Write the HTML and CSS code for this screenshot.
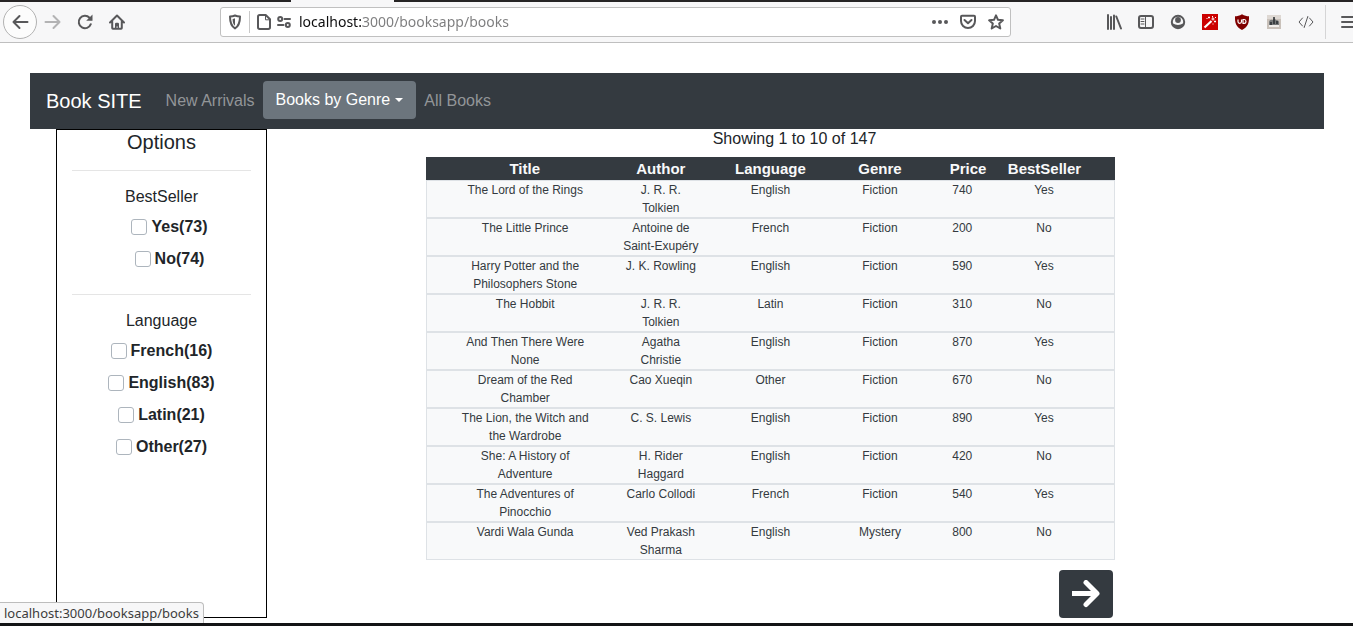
FILE: index.html
```html
<!DOCTYPE html>
<html lang="en">
<head>
<meta charset="utf-8">
<meta name="viewport" content="width=device-width, initial-scale=1">
<title>Book SITE</title>
<link rel="stylesheet" href="styles.css">
</head>
<body>
<header class="browser">
  <div class="tabstrip"><span class="tab-active"></span></div>
  <div class="toolbar">
    <button class="tool back" aria-label="Back"><svg width="18" height="18" viewBox="0 0 18 18"><path d="M16.500 9H2.500M8.500 3 2.500 9l6 6" class="ln"/></svg></button>
    <button class="tool dim" aria-label="Forward"><svg width="18" height="18" viewBox="0 0 18 18"><path d="M1.500 9h14M9.500 3l6 6-6 6" class="ln"/></svg></button>
    <button class="tool" aria-label="Reload"><svg width="18" height="18" viewBox="0 0 18 18"><path d="M14.800 11.200A6.200 6.200 0 1 1 13.500 4.800L15 6.300" class="ln"/><path d="M16.500 1.500v6.300h-6.300z" fill="currentColor"/></svg></button>
    <button class="tool" aria-label="Home"><svg width="18" height="18" viewBox="0 0 18 18"><path d="M2 9.500 9 2.500l7 7M4.200 8.500v6.600q0 .7.700.7h8.200q.7 0 .7-.7V8.500" class="ln"/><path d="M7 16v-5q0-1.200 1.200-1.200h1.600q1.200 0 1.200 1.200v5H9.700v-2.500H8.500V16z" fill="currentColor"/></svg></button>
    <div class="urlbar">
      <span class="shield"><svg width="14" height="16" viewBox="0 0 14 16"><path d="M7 1.500c2 .9 3.500 1 5 1 0 6-.8 9.500-5 11.900C2.800 12 2 8.500 2 2.500c1.500 0 3-.1 5-1z" class="ln"/><path d="M7 4.300v7.400C5 10 4.700 8 4.600 4.900 5.500 4.800 6.200 4.600 7 4.300z" fill="currentColor"/></svg></span>
      <svg class="page-icon" width="14" height="16" viewBox="0 0 14 16"><path d="M2.700 1h6L13 5.300v8q0 1.700-1.700 1.700H2.700Q1 15 1 13.300V2.700Q1 1 2.700 1z" class="ln"/><path d="M8.500 1v4.800H13" class="ln thin"/></svg>
      <svg class="perm-icon" width="14" height="14" viewBox="0 0 14 14"><circle cx="3.200" cy="4" r="2" class="ln"/><circle cx="10.800" cy="10" r="2" class="ln"/><path d="M7.500 4H13M1 10h5.500" class="ln"/></svg>
      <input class="address" type="text" aria-label="Address" value="localhost:3000/booksapp/books">
      <button class="mini" aria-label="Page actions"><svg width="16" height="16" viewBox="0 0 16 16" fill="currentColor"><circle cx="2" cy="8" r="2"/><circle cx="8" cy="8" r="2"/><circle cx="14" cy="8" r="2"/></svg></button>
      <button class="mini" aria-label="Save to Pocket"><svg width="16" height="16" viewBox="0 0 16 16"><path d="M2 1.800h12q1 0 1 1V7A7 7 0 0 1 1 7V2.800q0-1 1-1z" class="ln"/><path d="M4.500 6 8 9.300 11.500 6" class="ln"/></svg></button>
      <button class="mini" aria-label="Bookmark"><svg width="16" height="16" viewBox="0 0 16 16"><path d="m8 1.300 2 4.500 4.900.5-3.700 3.300 1.100 4.900L8 12l-4.300 2.500 1.100-4.900L1.100 6.300 6 5.800z" class="ln"/></svg></button>
    </div>
    <button class="tool" aria-label="Library"><svg width="16" height="16" viewBox="0 0 16 16"><path d="M2 1v14M5 3v12M8 1.500V15M10.300 2.500 15 14.500" class="ln"/></svg></button>
    <button class="tool" aria-label="Sidebars"><svg width="16" height="16" viewBox="0 0 16 16"><rect x="1" y="2" width="14" height="12" rx="2" class="ln"/><path d="M7.500 2v12M3 5h3M3 7.500h3M3 10h3" class="ln hair"/></svg></button>
    <button class="tool" aria-label="Account"><svg width="16" height="16" viewBox="0 0 16 16"><circle cx="8" cy="8" r="6.200" class="ln"/><circle cx="8" cy="6" r="2.900" fill="currentColor"/><path d="M2.500 9.300q5.500 3.400 11 0-1 5.200-5.500 5.200t-5.500-5.200z" fill="currentColor"/></svg></button>
    <button class="tool" aria-label="Color tool"><svg width="16" height="16" viewBox="0 0 16 16"><path d="M0 0h16v16H0z" fill="#cc0000"/><path d="m2.500 13.500 7-6.500" stroke="#fff" stroke-width="2.200"/><path d="M7 2.500v2M6 3.500h2M10.500 2v1.500M9.500 5h3M11 3.500v3M13 6.500v2M12 7.500h2M13.500 3v1M4.500 4.500h1M11 9.500v1" stroke="#fff"/></svg></button>
    <button class="tool" aria-label="Ad blocker"><svg width="16" height="16" viewBox="0 0 16 16"><path d="M8 .2c2.500 1.600 4.700 2 7 2C15.200 9 14 12.800 8 16 2 12.800.8 9 1 2.200c2.300 0 4.500-.4 7-2z" fill="#800000"/><path d="M4 5.500v2.300q0 1.500 1.700 1.500T7.500 7.800V5.500M9 5.500v3.800h1.200q1.800 0 1.800-1.900t-1.800-1.900z" fill="none" stroke="#fff" stroke-width="1.200"/></svg></button>
    <button class="tool" aria-label="Extension"><svg width="16" height="16" viewBox="0 0 16 16"><path d="M1 1h14v14H1z" fill="#c9c1ba"/><path d="M1 1h14v4H1z" fill="#ded8d3"/><path d="M3 9q0-4 4-3l1-2 2 2q4 0 3 5H3z" fill="#757879"/><path d="M8 3v7M5 8v3M11 7v3" stroke="#292c30" stroke-width="1.500"/><path d="M3 12h10" stroke="#f1eeeb" stroke-width="2"/></svg></button>
    <button class="tool" aria-label="Developer"><svg width="16" height="16" viewBox="0 0 16 16"><path d="M4.500 4 1 8l3.500 4M11.500 4 15 8l-3.500 4M9.800 2.500 6.200 13.500" class="ln thin"/></svg></button>
    <button class="menu" aria-label="Open menu"><svg width="12" height="14" viewBox="0 0 12 14"><path d="M1 2h13M1 7h13M1 12h13" class="ln"/></svg></button>
  </div>
</header>

<div class="site">
  <nav class="navbar">
    <a class="brand" href="#">Book SITE</a>
    <a class="nav-link" href="#">New Arrivals</a>
    <button class="dropdown">Books by Genre<span class="caret"></span></button>
    <a class="nav-link" href="#">All Books</a>
  </nav>
  <div class="content">
    <aside class="options">
      <h1 class="options-title">Options</h1>
      <fieldset class="group indented">
        <legend>BestSeller</legend>
        <label><input type="checkbox">Yes(73)</label>
        <label><input type="checkbox">No(74)</label>
      </fieldset>
      <fieldset class="group">
        <legend>Language</legend>
        <label><input type="checkbox">French(16)</label>
        <label><input type="checkbox">English(83)</label>
        <label><input type="checkbox">Latin(21)</label>
        <label><input type="checkbox">Other(27)</label>
      </fieldset>
    </aside>
    <main class="results">
      <p class="count">Showing 1 to 10 of 147</p>
      <div class="listing">
        <table class="books">
          <colgroup><col class="c-title"><col class="c-mid"><col class="c-mid"><col class="c-mid"><col class="c-price"><col></colgroup>
          <thead><tr><th>Title</th><th>Author</th><th>Language</th><th>Genre</th><th>Price</th><th>BestSeller</th></tr></thead>
          <tbody>
            <tr><td>The Lord of the Rings</td><td>J. R. R. Tolkien</td><td>English</td><td>Fiction</td><td>740</td><td>Yes</td></tr>
            <tr><td>The Little Prince</td><td>Antoine de Saint-Exupéry</td><td>French</td><td>Fiction</td><td>200</td><td>No</td></tr>
            <tr><td>Harry Potter and the Philosophers Stone</td><td>J. K. Rowling</td><td>English</td><td>Fiction</td><td>590</td><td>Yes</td></tr>
            <tr><td>The Hobbit</td><td>J. R. R. Tolkien</td><td>Latin</td><td>Fiction</td><td>310</td><td>No</td></tr>
            <tr><td>And Then There Were None</td><td>Agatha Christie</td><td>English</td><td>Fiction</td><td>870</td><td>Yes</td></tr>
            <tr><td>Dream of the Red Chamber</td><td>Cao Xueqin</td><td>Other</td><td>Fiction</td><td>670</td><td>No</td></tr>
            <tr><td>The Lion, the Witch and the Wardrobe</td><td>C. S. Lewis</td><td>English</td><td>Fiction</td><td>890</td><td>Yes</td></tr>
            <tr><td>She: A History of Adventure</td><td>H. Rider Haggard</td><td>English</td><td>Fiction</td><td>420</td><td>No</td></tr>
            <tr><td>The Adventures of Pinocchio</td><td>Carlo Collodi</td><td>French</td><td>Fiction</td><td>540</td><td>Yes</td></tr>
            <tr><td>Vardi Wala Gunda</td><td>Ved Prakash Sharma</td><td>English</td><td>Mystery</td><td>800</td><td>No</td></tr>
          </tbody>
        </table>
        <button class="next" aria-label="Next page"><svg width="28" height="28" viewBox="0 0 28 28" fill="none" stroke="#fff" stroke-linejoin="round"><path d="M0 13.500h22" stroke-width="5"/><path d="M14 2.500l11 11-11 11" stroke-width="5" stroke-linecap="round"/></svg></button>
      </div>
    </main>
  </div>
</div>
<div class="status">localhost:3000/booksapp/books</div>
<div class="desktop-edge"></div>
</body>
</html>
```
FILE: styles.css
```css
* { box-sizing: border-box; }

body {
  margin: 0;
  min-height: 100vh;
  display: flex;
  flex-direction: column;
  overflow: hidden;
  position: relative;
  background: #fff;
  color: #212529;
  font: 16px/20px "Liberation Sans", Arial, sans-serif;
}

button {
  border: 0;
  padding: 0;
  background: none;
  color: inherit;
  font: inherit;
}

.ln { fill: none; stroke: currentColor; stroke-width: 2; stroke-linecap: round; stroke-linejoin: round; }
.thin, .hair { stroke-width: 1; }

/* Browser chrome */
.browser { color: #58585a; background: #f7f7f8; border-bottom: 1px solid #bfbfbf; }
.tabstrip { height: 2px; background: #262425; padding-left: 291px; }
.tab-active { display: block; width: 103px; height: 2px; background: #f7f7f8; }
.toolbar { height: 40px; display: flex; align-items: center; padding-left: 3px; }
.tool { width: 32px; height: 32px; flex: none; display: flex; align-items: center; justify-content: center; }
.back { width: 34px; height: 34px; border: 1px solid #b2b2b2; border-radius: 50%; background: #fcfcfc; }
.dim { color: #b3b3b4; }
.urlbar {
  flex: 1;
  min-width: 0;
  height: 30px;
  margin: 0 87px;
  padding: 0 0 0 7px;
  display: flex;
  align-items: center;
  background: #fff;
  border: 1px solid #c0c0c0;
  border-radius: 3px;
}
.shield { display: flex; align-items: center; height: 22px; padding-right: 7px; border-right: 1px solid #c8c8c8; }
.page-icon { margin-left: 7px; }
.perm-icon { margin: 0 8px 0 6px; }
.address {
  flex: 1;
  min-width: 0;
  height: 28px;
  padding: 0;
  border: 0;
  outline: 0;
  font: 14px/28px "Noto Sans", sans-serif;
  color: #0c0c0d;
  background: linear-gradient(90deg, #0c0c0d 64px, #7c7c7d 64px) text;
  -webkit-text-fill-color: transparent;
}
.mini { width: 28px; height: 28px; display: flex; align-items: center; justify-content: center; }
.menu { flex: none; height: 34px; margin-left: 3px; padding-left: 15px; border-left: 1px solid #d5d5d6; display: flex; align-items: center; }

/* Site */
.site { flex: 1; display: flex; flex-direction: column; margin: 30px 29px 5px 30px; }
.navbar { display: flex; align-items: flex-start; padding: 8px 16px; background: #343a40; }
.brand { margin-right: 16px; padding: 5px 0; color: #fff; font-size: 20px; line-height: 30px; text-decoration: none; }
.nav-link { padding: 8px; color: #929598; line-height: 24px; text-decoration: none; }
.dropdown {
  display: flex;
  align-items: center;
  gap: 5px;
  height: 38px;
  padding: 0 13px;
  color: #fff;
  background: #6c757d;
  border-radius: 4px;
}
.caret { border: solid transparent; border-top-color: #fff; border-width: 4px 4px 0; }

.content { flex: 1; display: grid; grid-template-columns: 1fr 5fr; padding: 0 2px 0 26px; }
.options { border: 1px solid #000; padding: 0 15px; text-align: center; }
.options-title { margin: 0 0 16px; font-size: 20px; font-weight: 400; line-height: 24px; }
.group { margin: 0 0 19px; padding: 16px 0 0; border: 0; border-top: 1px solid #e5e5e5; min-width: 0; }
.group legend { float: left; width: 100%; padding: 0; margin-bottom: 4px; }
.group label { clear: both; display: flex; align-items: center; justify-content: center; gap: 4px; height: 32px; font-weight: 700; }
.indented label { padding-left: 16px; }
.group input { appearance: none; width: 16px; height: 16px; margin: 0; border: 1px solid #adb5bd; border-radius: 3px; background: #fff; }

.count { margin: 0 0 8px; text-align: center; }
.listing { width: 65.3%; margin-left: 15.1%; display: flex; flex-direction: column; }
.books { width: 100%; table-layout: fixed; border-collapse: separate; border-spacing: 0; text-align: center; font-size: 12px; line-height: 18px; }
.c-title { width: 26.1%; }
.c-mid { width: 15.9%; }
.c-price { width: 8%; }
.books th { padding: 0 15px; color: #f8f9fa; background: #343a40; font-size: 15px; line-height: 23px; }
.books td { padding: 0 15px; height: 38px; vertical-align: top; color: #343a40; background: #f8f9fa; border: solid #dee2e6; border-width: 1px 0; }
.books th:first-child, .books td:first-child { padding-left: 32px; }
.books td:first-child { border-left-width: 1px; }
.books th:last-child, .books td:last-child { padding-right: 31px; }
.books td:last-child { border-right-width: 1px; }
.next { align-self: flex-end; width: 54px; height: 48px; margin: 10px 2px 0 0; display: flex; align-items: center; justify-content: center; background: #343a40; border-radius: 4px; }

/* Link target shown over the page */
.status {
  position: absolute;
  left: 0;
  bottom: 3px;
  padding: 0 4px;
  color: #3c3c3c;
  background: #f7f7f8;
  border: solid #bdbdbd;
  border-width: 1px 1px 0 0;
  border-radius: 0 4px 0 0;
  font: 13px/20px "Noto Sans", sans-serif;
}
.desktop-edge { height: 3px; background: #131415; }
```
